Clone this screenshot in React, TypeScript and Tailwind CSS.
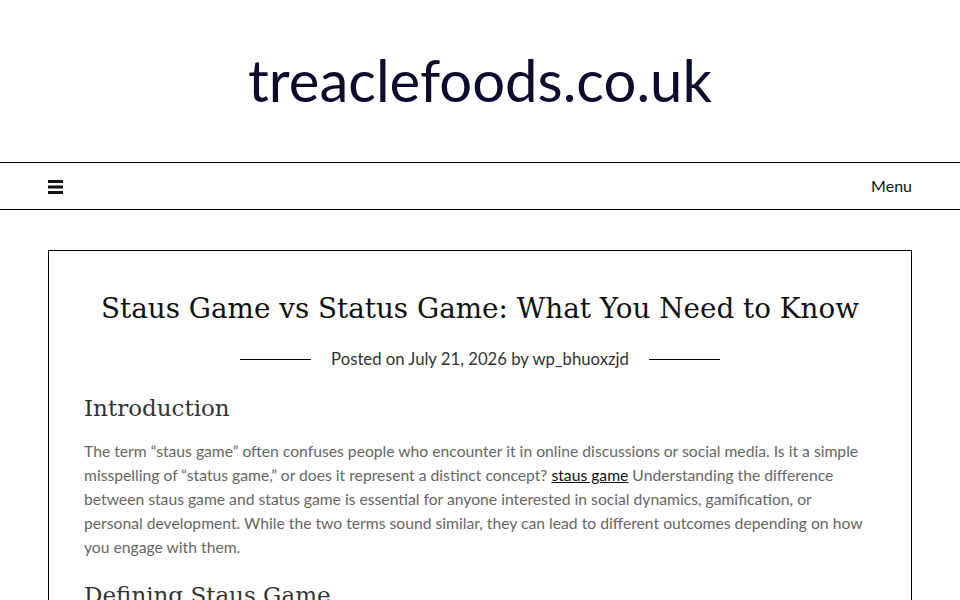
import React from "react";

export default function App() {
  return (
    <div className="min-h-screen bg-white font-['Lato','Open_Sans',sans-serif]">
      <header className="flex h-[162px] items-center justify-center pb-[2px]">
        <h1 className="text-[58px] leading-none text-[#0b0b2e]">treaclefoods.co.uk</h1>
      </header>

      <nav className="flex h-[48px] items-center justify-between border-y border-black px-[48px]">
        <svg width="15" height="14" viewBox="0 0 15 14" className="mt-[2px]">
          <rect x="0" y="0" width="15" height="3" fill="#111" />
          <rect x="0" y="5.5" width="15" height="3" fill="#111" />
          <rect x="0" y="11" width="15" height="3" fill="#111" />
        </svg>
        <span className="text-[16px] text-[#111]">Menu</span>
      </nav>

      <main className="px-[48px] pt-[40px]">
        <article className="border border-black pt-[36px] pb-10 pl-[35px] pr-[35px]">
          <h2 className="text-center font-['DejaVu_Serif','Liberation_Serif',serif] text-[27.8px] leading-[44px] text-[#111]">
            Staus Game vs Status Game: What You Need to Know
          </h2>
          <div className="mt-[16px] flex items-center justify-center gap-5 text-[16.7px] text-[#333]">
            <span className="h-px w-[71px] bg-black" />
            <span>
              Posted on <span>July 21, 2026</span> by <span>wp_bhuoxzjd</span>
            </span>
            <span className="h-px w-[71px] bg-black" />
          </div>

          <h3 className="mt-[19px] font-['DejaVu_Serif','Liberation_Serif',serif] text-[23px] leading-[34px] text-[#333]">
            Introduction
          </h3>
          <p className="mt-[14px] max-w-[782px] text-[15.7px] leading-[24px] text-[#666]">
            The term “staus game” often confuses people who encounter it in online discussions or social media. Is it a simple
            misspelling of “status game,” or does it represent a distinct concept?{" "}
            <a className="text-[#111] underline">staus game</a> Understanding the difference between staus game and status game
            is essential for anyone interested in social dynamics, gamification, or personal development. While the two terms
            sound similar, they can lead to different outcomes depending on how you engage with them.
          </p>

          <h3 className="mt-[19px] font-['DejaVu_Serif','Liberation_Serif',serif] text-[23px] leading-[34px] text-[#333]">
            Defining Staus Game
          </h3>
        </article>
      </main>
    </div>
  );
}
